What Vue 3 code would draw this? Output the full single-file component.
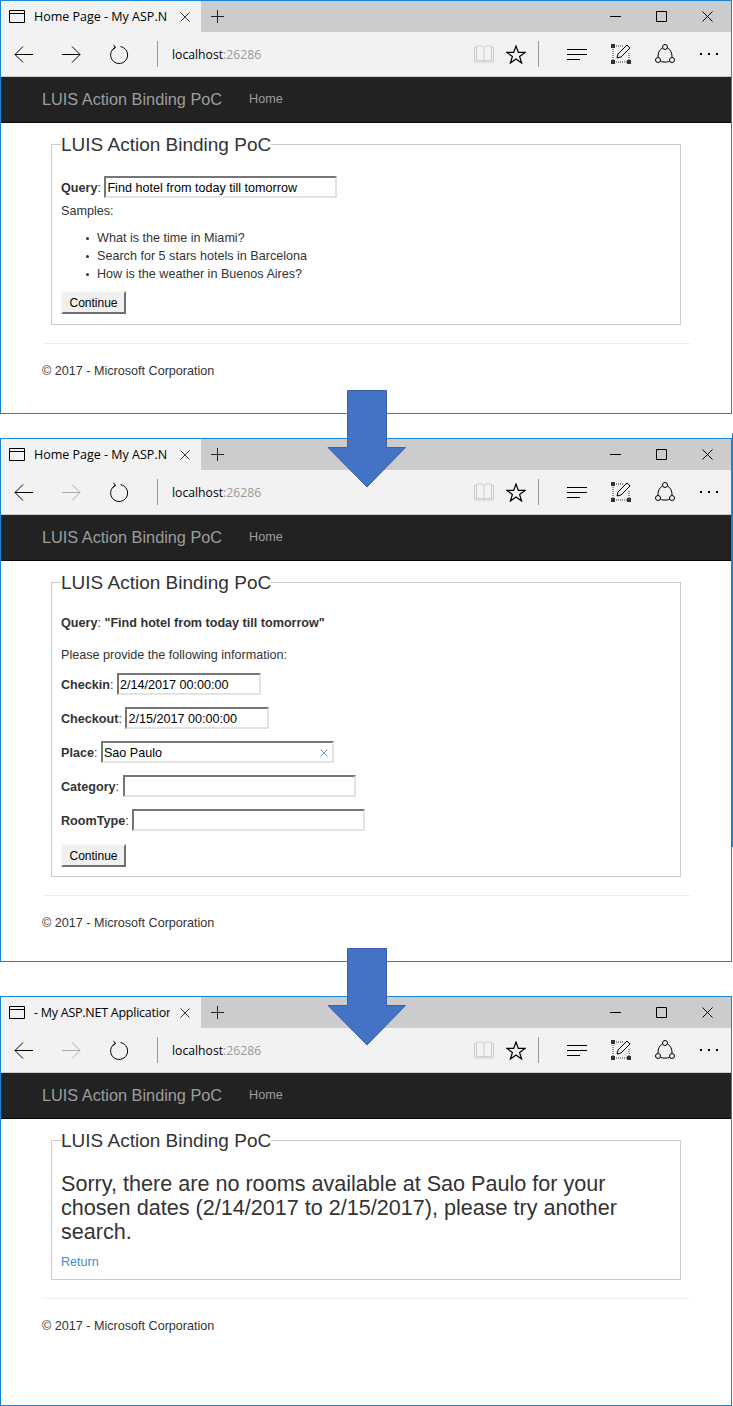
<script setup>
// one entry per browser window in the picture
const windows = [
  { id: 1, title: 'Home Page - My ASP.N', fwd: '#000' },
  { id: 2, title: 'Home Page - My ASP.N', fwd: '#aaa' },
  { id: 3, title: '- My ASP.NET Application', fwd: '#aaa' },
]
const samples = [
  'What is the time in Miami?',
  'Search for 5 stars hotels in Barcelona',
  'How is the weather in Buenos Aires?',
]
const fields = [
  { label: 'Checkin', value: '2/14/2017 00:00:00', cls: 'short' },
  { label: 'Checkout', value: '2/15/2017 00:00:00', cls: 'short' },
  { label: 'Place', value: 'Sao Paulo', cls: 'long', clear: true },
  { label: 'Category', value: '', cls: 'long' },
  { label: 'RoomType', value: '', cls: 'long' },
]
</script>

<template>
  <main class="page">
    <section v-for="w in windows" :key="w.id" class="win" :class="'win' + w.id">
      <div class="tabstrip">
        <div class="tab">
          <svg class="tabicon" width="16" height="13" viewBox="0 0 16 13"><path d="M.5.5h15v12H.5z M.5 3.500h15" fill="none" stroke="#000" /></svg>
          <span class="tabtitle">{{ w.title }}</span>
          <svg class="tabclose" width="10" height="10" viewBox="0 0 10 10"><path d="M.5.5l9 9M9.500.5l-9 9" stroke="#333" fill="none" /></svg>
        </div>
        <svg class="newtab" width="13" height="13" viewBox="0 0 13 13"><path d="M6.500 0v13M0 6.500h13" stroke="#222" fill="none" /></svg>
        <div class="winbtns">
          <svg width="11" height="11" viewBox="0 0 11 11"><path d="M0 5.500h11" stroke="#000" fill="none" /></svg>
          <svg width="11" height="11" viewBox="0 0 11 11"><path d="M.5.5h10v10H.5z" stroke="#000" fill="none" /></svg>
          <svg width="11" height="11" viewBox="0 0 11 11"><path d="M.5.5l10 10M10.500.5l-10 10" stroke="#000" fill="none" /></svg>
        </div>
      </div>

      <div class="toolbar">
        <svg class="back" width="19" height="17" viewBox="0 0 19 17"><path d="M19 8.500H1M9 .5l-8 8 8 8" stroke="#000" fill="none" /></svg>
        <svg class="fwd" width="19" height="17" viewBox="0 0 19 17"><path d="M0 8.500h18M10 .5l8 8-8 8" :stroke="w.fwd" fill="none" /></svg>
        <svg class="reload" width="19" height="20" viewBox="0 0 19 20"><path d="M5.500 3.300A8.500 8.500 0 1 0 10.500 2.600M3.500.8l2 2.800-2.800 2" stroke="#000" fill="none" /></svg>
        <div class="vsep"></div>
        <div class="url">localhost<span>:26286</span></div>
        <svg class="book" width="20" height="18" viewBox="0 0 20 18"><path d="M.5 2.500h2v13h6l1.500 1 1.500-1h6v-13h2v14.500h-19z M2.500 1h6l1.500 1.500L11.500 1h6v14.500h-6l-1.500 1-1.500-1h-6z M10 2.500v14" stroke="#ccc" fill="none" /></svg>
        <svg class="star" width="20" height="19" viewBox="0 0 20 19"><path d="M10 1l2.300 6.400H19l-5.400 4 2 6.600L10 14l-5.600 4 2-6.600-5.400-4h6.700z" stroke="#000" stroke-width="1.200" fill="none" /></svg>
        <div class="vsep sep2"></div>
        <svg class="hub" width="20" height="11" viewBox="0 0 20 11"><path d="M0 .5h20M0 5.500h20M0 10.500h13" stroke="#000" fill="none" /></svg>
        <svg class="note" width="20" height="20" viewBox="0 0 20 20"><path d="M2 3v14M3 2h10M3 18h14M18 9v8" stroke="#333" stroke-dasharray="1 1" fill="none" /><path d="M0 0h4v4H0zM0 16h4v4H0zM16 16h4v4h-4z" fill="#333" /><path d="M6 14l1-4 9-9 3 3-9 9z" stroke="#000" fill="#f2f2f2" /></svg>
        <svg class="share" width="20" height="20" viewBox="0 0 20 20"><path d="M7.500 4C4.500 5.500 2.800 9 3 13M12.500 4c3 1.500 4.700 5 4.500 9M5.500 17.500c3 .8 6 .8 9 0" stroke="#000" fill="none" /><circle cx="10" cy="3" r="2.500" stroke="#000" fill="none" /><circle cx="3" cy="16" r="2.500" stroke="#000" fill="none" /><circle cx="17" cy="16" r="2.500" stroke="#000" fill="none" /></svg>
        <div class="more"><i></i><i></i><i></i></div>
      </div>

      <nav class="navbar"><span class="brand">LUIS Action Binding PoC</span><span class="navlink">Home</span></nav>

      <div class="container">
        <fieldset>
          <legend>LUIS Action Binding PoC</legend>

          <template v-if="w.id === 1">
            <div class="field query"><span class="lbl"><b>Query</b>:</span><input class="inp long" value="Find hotel from today till tomorrow" /></div>
            <div class="samples">Samples:</div>
            <ul>
              <li v-for="s in samples" :key="s">{{ s }}</li>
            </ul>
            <button class="btn">Continue</button>
          </template>

          <template v-else-if="w.id === 2">
            <p class="qline"><b>Query</b>: <b>"Find hotel from today till tomorrow"</b></p>
            <p class="please">Please provide the following information:</p>
            <div v-for="f in fields" :key="f.label" class="field">
              <span class="lbl"><b>{{ f.label }}</b>:</span>
              <span class="inpwrap">
                <input class="inp" :class="f.cls" :value="f.value" />
                <svg v-if="f.clear" class="clear" width="8" height="8" viewBox="0 0 8 8"><path d="M.5.5l7 7M7.500.5l-7 7" stroke="#5a9bd0" fill="none" /></svg>
              </span>
            </div>
            <button class="btn btn2">Continue</button>
          </template>

          <template v-else>
            <h3>Sorry, there are no rooms available at Sao Paulo for your chosen dates (2/14/2017 to 2/15/2017), please try another search.</h3>
            <a class="ret">Return</a>
          </template>
        </fieldset>
        <hr />
        <footer>© 2017 - Microsoft Corporation</footer>
      </div>
    </section>

    <!-- these lie over the windows -->
    <div class="stripe"></div>
    <svg class="arrow a1" width="80" height="98" viewBox="0 0 80 98"><path d="M20.500.5h39v57h19L40 97 1 57.500h19.500z" fill="#4472c4" stroke="#3b62a8" /></svg>
    <svg class="arrow a2" width="80" height="98" viewBox="0 0 80 98"><path d="M20.500.5h39v57h19L40 97 1 57.500h19.500z" fill="#4472c4" stroke="#3b62a8" /></svg>
  </main>
</template>

<style scoped>
.page {
  position: relative;
  width: 733px;
  height: 1406px;
  background: #fff;
  font-family: "Liberation Sans", Arial, sans-serif;
  font-size: 12.6px;
  line-height: 18px;
  color: #333;
  overflow: hidden;
}
.win {
  box-sizing: border-box;
  width: 732px;
  border: 1px solid #1883d7;
  position: absolute;
  left: 0;
  background: #fff;
}
.win1 { top: 0; height: 414px; }
.win2 { top: 438px; height: 524px; }
.win3 { top: 996px; height: 410px; }

.tabstrip {
  height: 31px;
  background: #ccc;
  display: flex;
  align-items: center;
}
.tab {
  width: 200px;
  height: 31px;
  background: #f2f2f2;
  display: flex;
  align-items: center;
  box-sizing: border-box;
  padding-left: 8px;
}
.tabtitle {
  font-family: "Open Sans", "Noto Sans", sans-serif;
  font-size: 12.500px;
  color: #000;
  margin-left: 9px;
  width: 136px;
  overflow: hidden;
  white-space: nowrap;
}
.win3 .tabtitle { letter-spacing: -0.25px; }
.tabclose { margin-left: 10px; }
.newtab { margin-left: 10px; }
.winbtns {
  margin-left: auto;
  display: flex;
  gap: 35px;
  padding-right: 18px;
}
.toolbar {
  height: 44px;
  background: #f2f2f2;
  border-bottom: 1px solid #ccc;
  display: flex;
  align-items: center;
}
.back { margin-left: 13px; }
.fwd { margin-left: 29px; }
.reload { margin-left: 29px; }
.vsep {
  width: 1px;
  height: 26px;
  background: #999;
  margin-left: 28px;
}
.url {
  margin-left: 14px;
  padding-top: 1px;
  font-family: "Open Sans", "Noto Sans", sans-serif;
  font-size: 12.200px;
  color: #000;
  width: 302px;
}
.url span { color: #999; }
.star { margin-left: 12px; }
.sep2 { margin-left: 12px; }
.hub { margin-left: 28px; }
.note { margin-left: 24px; }
.share { margin-left: 24px; }
.more {
  margin-left: 25px;
  display: flex;
  gap: 6px;
}
.more i {
  width: 2px;
  height: 2px;
  background: #000;
}
.navbar {
  box-sizing: border-box;
  height: 46px;
  padding: 0 0 1px 41px;
  background: #222;
  border-bottom: 1px solid #080808;
  display: flex;
  align-items: center;
}
.brand {
  font-size: 16.300px;
  color: #9d9d9d;
}
.navlink {
  margin-left: 27px;
  color: #9d9d9d;
}
.container { padding: 0 41px; }
fieldset {
  margin: 10px 9px 0;
  border: 1px solid #ccc;
  padding: 0 9px;
  min-width: 0;
}
legend {
  font-size: 19px;
  line-height: 20px;
  color: #333;
  padding: 2px 0 0;
}
.field {
  display: flex;
  align-items: center;
  gap: 3.500px;
  height: 22px;
  margin-top: 12px;
}
.field.query { margin-top: 21px; }
.lbl { padding-top: 1px; }
.inpwrap { position: relative; display: flex; }
.inp {
  box-sizing: border-box;
  height: 22px;
  border: 2px solid;
  border-color: #767676 #e3e3e3 #e3e3e3 #767676;
  padding: 1px 1px 0;
  font-family: "Liberation Sans", Arial, sans-serif;
  font-size: 12.600px;
  color: #000;
  background: #fff;
}
.inp.short { width: 144px; }
.inp.long { width: 233px; }
.clear {
  position: absolute;
  right: 6px;
  top: 8px;
}
.samples { margin-top: 4px; }
ul {
  margin: 9px 0 8px;
  padding-left: 36px;
  list-style: none;
}
li { position: relative; }
li::before {
  content: "";
  position: absolute;
  left: -11px;
  top: 8px;
  width: 3px;
  height: 3px;
  background: #333;
  border-radius: 50%;
}
.btn {
  display: block;
  box-sizing: border-box;
  width: 65px;
  height: 23px;
  background: #f0f0f0;
  border: 2px solid;
  border-color: #f5f5f5 #707070 #707070 #f5f5f5;
  font-family: "Liberation Sans", Arial, sans-serif;
  font-size: 12px;
  color: #000;
  padding: 0;
  margin-bottom: 10px;
}
.btn2 { margin-top: 13px; margin-bottom: 9px; }
.qline { margin: 21px 0 0; }
.please { margin: 14px 0 0; }
.please + .field { margin-top: 9px; }
h3 {
  margin: 21px 0 0;
  font-size: 21.600px;
  font-weight: 400;
  line-height: 24px;
}
.ret {
  display: block;
  margin: 9px 0 8px;
  color: #428bca;
}
hr {
  border: 0;
  border-top: 1px solid #eee;
  margin: 18px 0 0;
}
footer { margin-top: 18px; }
.stripe {
  position: absolute;
  left: 732px;
  top: 433px;
  width: 1px;
  height: 414px;
  background: #1883d7;
}
.arrow { position: absolute; left: 327px; }
.a1 { top: 390px; }
.a2 { top: 948px; }
</style>
